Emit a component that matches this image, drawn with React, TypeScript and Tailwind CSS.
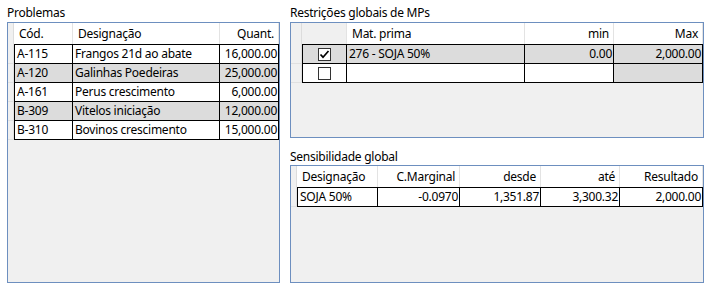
import React from "react";

type Align = "left" | "right";

type Column = {
  title: string;
  width: number;
  align: Align;
};

type Cell = {
  text?: string;
  check?: boolean;
  shaded?: boolean;
};

type GridProps = {
  stripWidth: number;
  columns: Column[];
  rows: Cell[][];
  headerFirstPlain?: boolean;
};

function CheckBox({ checked }: { checked: boolean }) {
  return (
    <div className="w-[13px] h-[13px] border border-[#333333] bg-white flex items-center justify-center">
      {checked && (
        <svg width="11" height="11" viewBox="0 0 11 11">
          <path d="M1.5 5.5 L4 8.2 L9.5 2" fill="none" stroke="#000" strokeWidth="1.7" />
        </svg>
      )}
    </div>
  );
}

function Grid({ stripWidth, columns, rows, headerFirstPlain }: GridProps) {
  return (
    <div className="flex flex-col">
      {/* column headers */}
      <div className="flex h-[21px]">
        <div
          className="shrink-0 bg-[#f0f0f0] border-r border-[#dcdcdc]"
          style={{ width: stripWidth }}
        />
        {columns.map((c, i) => (
          <div
            key={i}
            className={
              "shrink-0 flex items-center border-r border-[#e3e3e3] px-[5px] " +
              (headerFirstPlain && i === 0 ? "bg-[#f0f0f0] " : "bg-white ") +
              (c.align === "right" ? "justify-end pr-[4px]" : "justify-start")
            }
            style={{ width: c.width }}
          >
            {c.title}
          </div>
        ))}
      </div>
      {/* data rows */}
      {rows.map((row, r) => (
        <div key={r} className={"flex " + (r === 0 ? "h-[20px]" : "h-[19px]")}>
          <div
            className="shrink-0 bg-[#f0f0f0] border-r border-b border-[#e0e0e0]"
            style={{ width: stripWidth }}
          />
          {row.map((cell, i) => {
            const col = columns[i];
            return (
              <div
                key={i}
                className={
                  "shrink-0 flex items-center border-r border-b border-black " +
                  (r === 0 ? "border-t " : "") +
                  (i === 0 ? "border-l " : "") +
                  (cell.shaded ? "bg-[#dcdcdc] " : "bg-white ") +
                  (cell.check !== undefined
                    ? "justify-center"
                    : col.align === "right"
                    ? "justify-end pr-[1px]"
                    : "justify-start pl-[2px]")
                }
                style={{ width: col.width }}
              >
                {cell.check !== undefined ? (
                  <CheckBox checked={cell.check} />
                ) : (
                  <span className="whitespace-nowrap">{cell.text}</span>
                )}
              </div>
            );
          })}
        </div>
      ))}
    </div>
  );
}

const problemas: [string, string, string][] = [
  ["A-115", "Frangos 21d ao abate", "16,000.00"],
  ["A-120", "Galinhas Poedeiras", "25,000.00"],
  ["A-161", "Perus crescimento", "6,000.00"],
  ["B-309", "Vitelos iniciação", "12,000.00"],
  ["B-310", "Bovinos crescimento", "15,000.00"],
];

export default function App() {
  return (
    <div
      className="w-[711px] h-[290px] bg-white text-black text-[12px] tracking-[-0.25px] flex gap-[10px] pl-[7px] pt-[4px]"
      style={{ fontFamily: '"Noto Sans", "Open Sans", sans-serif' }}
    >
      {/* Problemas */}
      <div className="w-[273px] shrink-0 flex flex-col">
        <div className="h-[18px] leading-[18px]">Problemas</div>
        <div className="h-[261px] border border-[#6d8fbf] bg-[#f0f0f0] overflow-hidden">
          <Grid
            stripWidth={6}
            columns={[
              { title: "Cód.", width: 59, align: "left" },
              { title: "Designação", width: 147, align: "left" },
              { title: "Quant.", width: 59, align: "right" },
            ]}
            rows={problemas.map((p, r) =>
              p.map((t) => ({ text: t, shaded: r % 2 === 1 }))
            )}
          />
        </div>
      </div>

      <div className="w-[414px] shrink-0 flex flex-col">
        {/* Restrições globais */}
        <div className="h-[18px] leading-[18px]">Restrições globais de MPs</div>
        <div className="h-[116px] border border-[#6d8fbf] bg-[#f0f0f0] overflow-hidden">
          <Grid
            stripWidth={11}
            headerFirstPlain
            columns={[
              { title: "", width: 45, align: "left" },
              { title: "Mat. prima", width: 178, align: "left" },
              { title: "min", width: 89, align: "right" },
              { title: "Max", width: 89, align: "right" },
            ]}
            rows={[
              [
                { check: true, shaded: true },
                { text: "276 - SOJA 50%", shaded: true },
                { text: "0.00", shaded: true },
                { text: "2,000.00", shaded: true },
              ],
              [
                { check: false },
                { text: "" },
                { text: "" },
                { text: "", shaded: true },
              ],
            ]}
          />
        </div>

        {/* Sensibilidade global */}
        <div className="mt-[10px] h-[17px] leading-[17px]">Sensibilidade global</div>
        <div className="h-[118px] border border-[#6d8fbf] bg-[#f0f0f0] overflow-hidden">
          <Grid
            stripWidth={6}
            columns={[
              { title: "Designação", width: 81, align: "left" },
              { title: "C.Marginal", width: 82, align: "right" },
              { title: "desde", width: 81, align: "right" },
              { title: "até", width: 79, align: "right" },
              { title: "Resultado", width: 83, align: "right" },
            ]}
            rows={[
              [
                { text: "SOJA 50%" },
                { text: "-0.0970" },
                { text: "1,351.87" },
                { text: "3,300.32" },
                { text: "2,000.00" },
              ],
            ]}
          />
        </div>
      </div>
    </div>
  );
}
